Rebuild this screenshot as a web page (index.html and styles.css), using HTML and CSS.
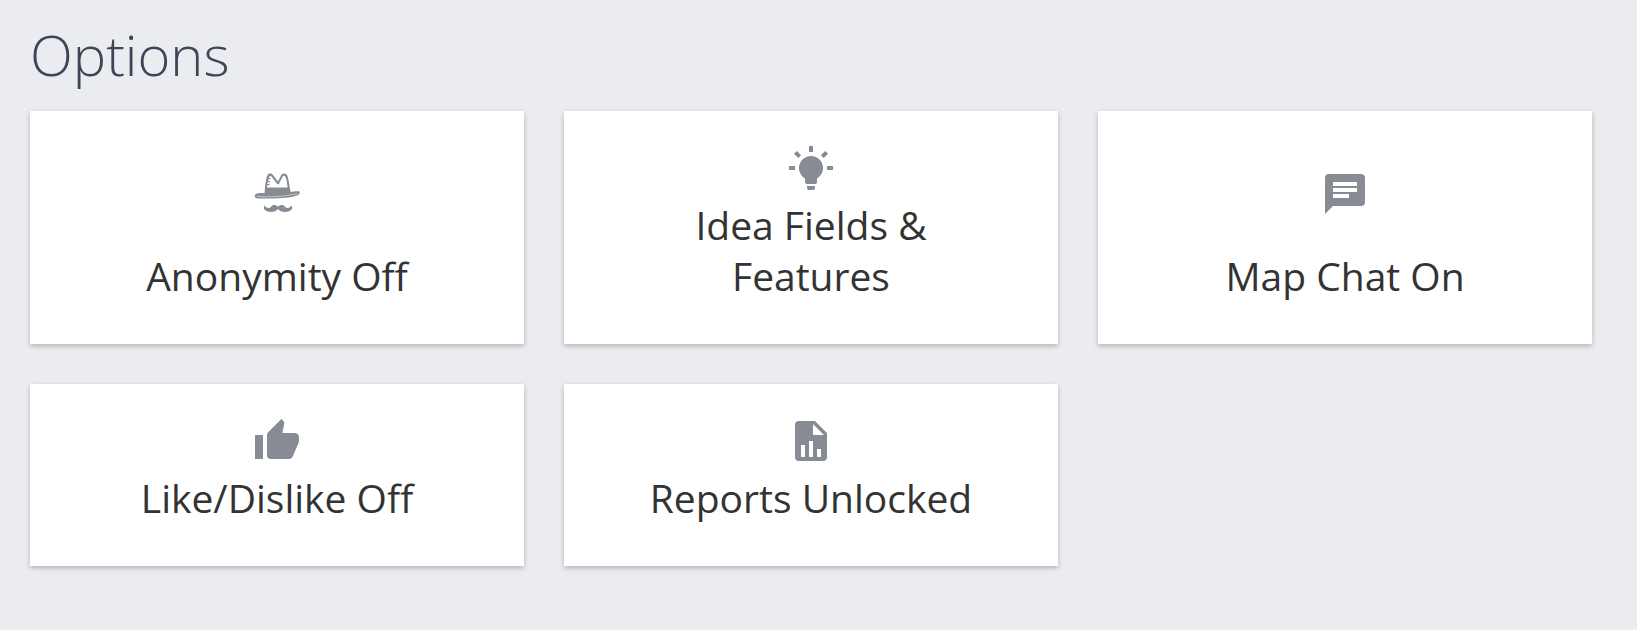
FILE: index.html
```html
<!DOCTYPE html>
<html lang="en">
<head>
<meta charset="utf-8">
<meta name="viewport" content="width=device-width, initial-scale=1">
<title>Options</title>
<link rel="stylesheet" href="styles.css">
</head>
<body>
<main class="page">
  <h1 class="title">Options</h1>
  <div class="options">
    <button type="button" class="card">
      <span class="card-icon"><svg class="icon" viewBox="0 0 48 48" aria-hidden="true"><path fill-rule="evenodd" d="M2.500 24.300C5 23 8.500 23 11.600 23.200C12 17 12.500 9 14.500 5C16 3 18.500 3.300 20 5L25 11.500L28 5.500C29.500 2.800 33 2.800 34.500 6C36 11 36.500 17 37.500 21.800C40.500 21.800 44.500 20.500 46.700 21.600C47.200 24.600 45 25.800 41 26.500C31 28.500 14 29 3.500 28.200C1.500 27.500 1 25.800 2.500 24.300ZM13.800 17.500H34.500C34.300 14 33.800 9.500 32.300 6.600C31.500 5.300 30.300 5.500 29.500 7L26 13.800Q25 15 24 13.800L18.500 6.500C17.500 5.500 16.500 6 15.900 7.500Q14.300 12 13.800 17.500Z"/><path d="M15 8H17.500V9.200H15ZM14.500 11H17V12.200H14.500ZM14 14H16.500V15.200H14Z"/><path class="icon-shine" d="M4 26.400C16 27.300 32 26.600 44.500 23.600"/><path d="M25 36.800C23 34.300 19.500 34.600 18 36.800C16 39 13 38 11.500 35.500C10 38 11 40 13.500 41C17 43 23 42 25 39C27 42 33 43 36.500 41C39 40 40 38 38.500 35.500C37 38 34 39 32 36.800C30.500 34.600 27 34.300 25 36.800Z"/></svg></span>
      <span class="card-label">Anonymity Off</span>
    </button>
    <button type="button" class="card">
      <span class="card-icon"><svg class="icon" viewBox="0 0 24 24" aria-hidden="true"><path d="M12,6A6,6 0 0,1 18,12C18,14.22 16.79,16.16 15,17.2V19A1,1 0 0,1 14,20H10A1,1 0 0,1 9,19V17.2C7.21,16.16 6,14.22 6,12A6,6 0 0,1 12,6M14,21V22A1,1 0 0,1 13,23H11A1,1 0 0,1 10,22V21H14M20,11H23V13H20V11M1,11H4V13H1V11M13,1V4H11V1H13M4.92,3.5L7.05,5.64L5.63,7.05L3.5,4.93L4.92,3.5M16.95,5.63L19.07,3.5L20.5,4.93L18.37,7.05L16.95,5.63Z"/></svg></span>
      <span class="card-label">Idea Fields &amp; Features</span>
    </button>
    <button type="button" class="card">
      <span class="card-icon"><svg class="icon" viewBox="0 0 24 24" aria-hidden="true"><path fill-rule="evenodd" d="M20 2H4A2 2 0 0 0 2 4V22L6 18H20A2 2 0 0 0 22 16V4A2 2 0 0 0 20 2ZM6 6H18V8H6ZM6 9H18V11H6ZM6 12H14V14H6Z"/></svg></span>
      <span class="card-label">Map Chat On</span>
    </button>
    <button type="button" class="card">
      <span class="card-icon"><svg class="icon" viewBox="0 0 24 24" aria-hidden="true"><path d="M23,10C23,8.89 22.1,8 21,8H14.68L15.64,3.43C15.66,3.33 15.67,3.22 15.67,3.11C15.67,2.7 15.5,2.32 15.23,2.05L14.17,1L7.59,7.58C7.22,7.95 7,8.45 7,9V19A2,2 0 0,0 9,21H18C18.83,21 19.54,20.5 19.84,19.78L22.86,12.73C22.95,12.5 23,12.26 23,12V10M1,21H5V9H1V21Z"/></svg></span>
      <span class="card-label">Like/Dislike Off</span>
    </button>
    <button type="button" class="card">
      <span class="card-icon"><svg class="icon" viewBox="0 0 24 24" aria-hidden="true"><path fill-rule="evenodd" d="M6 2A2 2 0 0 0 4 4V20A2 2 0 0 0 6 22H18A2 2 0 0 0 20 20V8L14 2ZM13 3.500L18.500 9H13ZM7 20V14H9V20ZM11 20V12H13V20ZM15 20V16H17V20Z"/></svg></span>
      <span class="card-label">Reports Unlocked</span>
    </button>
  </div>
</main>
</body>
</html>
```
FILE: styles.css
```css
* {
  box-sizing: border-box;
}

body {
  margin: 0;
  background: #eaecf0;
  font-family: "Open Sans", "Liberation Sans", sans-serif;
}

.page {
  padding: 14px 45px 40px 30px;
}

.title {
  margin: 0 0 17px;
  color: #3d4657;
  font-size: 56px;
  font-weight: 300;
  line-height: 80px;
}

.options {
  display: grid;
  grid-template-columns: repeat(3, minmax(0, 1fr));
  gap: 40px;
}

.card {
  display: flex;
  flex-direction: column;
  align-items: center;
  padding: 33px 80px 43px;
  border: 0;
  background: #fff;
  box-shadow: 0 2px 5px rgba(0, 0, 0, 0.24);
  color: #333;
  font: inherit;
  cursor: pointer;
}

.card-icon {
  display: flex;
  flex: 1;
  align-items: center;
  margin-bottom: 7px;
}

.icon {
  width: 48px;
  height: 48px;
  fill: #868b94;
}

.icon-shine {
  fill: none;
  stroke: #c3c6cb;
  stroke-width: 1;
}

.card-label {
  font-size: 39px;
  line-height: 51px;
}
```
